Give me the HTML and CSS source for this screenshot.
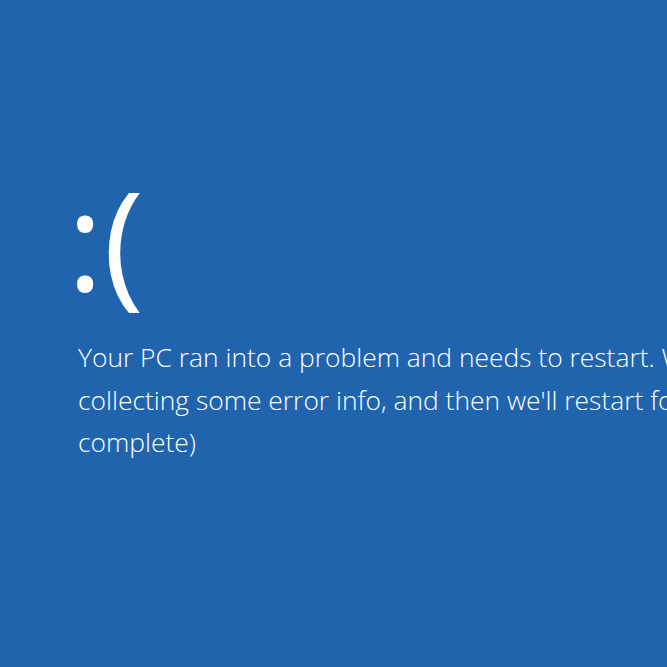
FILE: index.html
```html
<!DOCTYPE html>
<html lang="en">
<head>
<meta charset="utf-8">
<title>Blue screen</title>
<link rel="stylesheet" href="styles.css">
</head>
<body>
<main class="screen">
  <div class="face">:(</div>
  <p class="message">
    <span class="line">Your PC ran into a problem and needs to restart. We're just</span>
    <span class="line">collecting some error info, and then we'll restart for you. (0%</span>
    <span class="line">complete)</span>
  </p>
</main>
</body>
</html>
```

FILE: styles.css
```css
html, body {
  margin: 0;
  padding: 0;
  background: #2064ae;
  overflow: hidden;
}
.screen {
  width: 667px;
  height: 667px;
  overflow: hidden;
  padding: 170px 0 0 70px;
  box-sizing: border-box;
  color: #ffffff;
  font-family: "Open Sans", "Noto Sans", sans-serif;
  font-weight: 300;
}
.face {
  height: 160px;
  margin-left: -3px;
  font-size: 138px;
  font-weight: 400;
  line-height: 134px;
  white-space: nowrap;
}
.message {
  margin: 6px 0 0 8px;
  font-size: 26.4px;
  line-height: 42.5px;
}
.line {
  display: block;
  white-space: nowrap;
}
```
